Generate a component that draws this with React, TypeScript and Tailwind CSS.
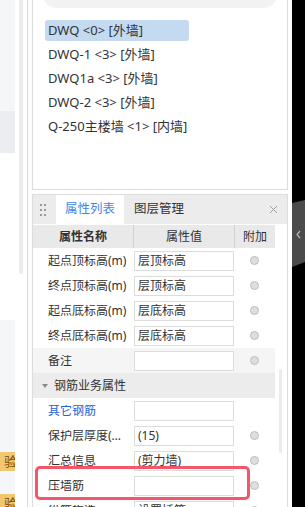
import React from 'react';

type Row = {
  name: string;
  value: string;
  blue?: boolean;
  dot?: boolean;
  hover?: boolean;
};

const walls = ['DWQ <0> [外墙]', 'DWQ-1 <3> [外墙]', 'DWQ1a <3> [外墙]', 'DWQ-2 <3> [外墙]', 'Q-250主楼墙 <1> [内墙]'];

const baseRows: Row[] = [
  { name: '起点顶标高(m)', value: '层顶标高', dot: true },
  { name: '终点顶标高(m)', value: '层顶标高', dot: true },
  { name: '起点底标高(m)', value: '层底标高', dot: true },
  { name: '终点底标高(m)', value: '层底标高', dot: true },
  { name: '备注', value: '', dot: true, hover: true },
];

const rebarRows: Row[] = [
  { name: '其它钢筋', value: '', blue: true },
  { name: '保护层厚度(mm)', value: '(15)', dot: true },
  { name: '汇总信息', value: '(剪力墙)', dot: true },
  { name: '压墙筋', value: '', dot: true },
  { name: '纵筋构造', value: '设置插筋', dot: true },
];

function PropRow({ row }: { row: Row }) {
  return (
    <div className={`flex h-[25px] shrink-0 items-center ${row.hover ? 'bg-[#f5f5f5]' : ''}`}>
      <div className={`w-[101px] truncate pl-[15px] pr-[6px] ${row.blue ? 'text-[#2463d6]' : 'text-[#333]'}`}>{row.name}</div>
      <div className="flex h-[20px] w-[100px] items-center border border-[#dcdcdc] bg-white pl-[3px] text-[#333]">{row.value}</div>
      <div className="flex w-[41px] justify-center">
        {row.dot && <div className="h-[9px] w-[9px] rounded-full border border-[#bdbdbd] bg-[#dedede]" />}
      </div>
    </div>
  );
}

export default function App() {
  return (
    <div
      className="relative flex h-[507px] w-[305px] overflow-hidden bg-white text-[12px] leading-none"
      style={{ fontFamily: '"Noto Sans", "Noto Sans CJK SC", sans-serif' }}>
      {/* ---------------- left page strip ---------------- */}
      <div className="flex w-[15px] shrink-0 flex-col">
        <div className="h-[111px] shrink-0 bg-[#f5f6f8]" />
        <div className="h-[42px] shrink-0 bg-[#ebedf0]" />
        <div className="h-[167px] shrink-0 bg-white" />
        <div className="flex flex-1 flex-col bg-[#f5f6f8]">
          <div className="mt-[132px] flex h-[19px] shrink-0 items-center justify-end overflow-hidden bg-[#f2c772] text-[13px] text-[#7a4b00]">
            <span className="-mr-[2px]">验</span>
          </div>
          <div className="mt-[23px] flex h-[19px] shrink-0 items-center justify-end overflow-hidden bg-[#f2c772] text-[13px] text-[#7a4b00]">
            <span className="-mr-[2px]">验</span>
          </div>
        </div>
      </div>
      <div className="ml-[4px] w-[4px] shrink-0">
        <div className="h-[274px] rounded-b-full bg-[#ebebeb]" />
      </div>
      <div className="w-[4px] shrink-0" />
      <div className="w-px shrink-0 bg-[#dadada]" />
      <div className="w-[4px] shrink-0 bg-[#fcfcfc]" />

      {/* ---------------- panels ---------------- */}
      <div className="flex w-[256px] shrink-0 flex-col overflow-hidden">
        {/* component list */}
        <div className="flex h-[190px] shrink-0 flex-col border-x border-b border-[#dcdcdc] bg-white">
          <div className="-mt-[22px] ml-[9px] mr-[9px] flex h-[30px] shrink-0 items-center justify-between rounded-full bg-[#f2f2f2] px-[12px] text-[13px] text-[#999]">
            <span>搜索构件...</span>
            <span className="text-[11px] text-[#aaa]">⌕</span>
          </div>
          <div className="mt-[12px] flex flex-col gap-[3px] text-[13px] text-[#333]">
            {walls.map((w, i) => (
              <div
                key={w}
                className={`ml-[12px] flex h-[21px] w-[144px] shrink-0 items-center whitespace-nowrap rounded-[3px] pl-[3px] ${i === 0 ? 'bg-[#c4daf1]' : ''}`}>
                {w}
              </div>
            ))}
          </div>
        </div>

        {/* property panel */}
        <div className="mt-[4px] flex flex-1 flex-col border-x border-t border-[#dcdcdc] bg-white">
          <div className="flex h-[29px] shrink-0 items-stretch bg-[#ececec]">
            <div className="ml-[7px] mr-[10px] grid grid-cols-2 content-center gap-x-[2px] gap-y-[3px]">
              {[0, 1, 2, 3, 4, 5].map((d) => (
                <div key={d} className="h-[2px] w-[2px] bg-[#999]" />
              ))}
            </div>
            <div className="flex w-[68px] items-center justify-center bg-white text-[12.5px] text-[#3f86e8]">属性列表</div>
            <div className="ml-[10px] flex items-center text-[12.5px] text-[#333]">图层管理</div>
            <div className="ml-auto mr-[9px] flex items-center">
              <svg width="9" height="9" viewBox="0 0 9 9">
                <path d="M1 1 L8 8 M8 1 L1 8" stroke="#a0a0a0" strokeWidth="1" />
              </svg>
            </div>
          </div>

          <div className="mt-[1px] flex">
            <div className="flex w-[242px] flex-col">
              <div className="flex h-[23px] shrink-0 items-center bg-[#e9e9e9] font-bold text-[#333]">
                <div className="flex h-full w-[101px] items-center justify-center border-r border-[#d2d2d2]">属性名称</div>
                <div className="flex h-full w-[101px] items-center justify-center border-r border-[#d2d2d2] font-normal">属性值</div>
                <div className="flex w-[40px] justify-center font-normal">附加</div>
              </div>
              {baseRows.map((r) => (
                <PropRow key={r.name} row={r} />
              ))}
              <div className="flex h-[25px] shrink-0 items-center bg-[#ececec] text-[#333]">
                <svg className="ml-[9px] mr-[6px]" width="6" height="4" viewBox="0 0 6 4">
                  <polygon points="0,0 6,0 3,4" fill="#8a8a8a" />
                </svg>
                <span>钢筋业务属性</span>
              </div>
              {rebarRows.map((r) => (
                <PropRow key={r.name} row={r} />
              ))}
            </div>
            <div className="ml-[4px] mt-[144px] h-[84px] w-[3px] rounded-full bg-[#ebebeb]" />
          </div>
        </div>
      </div>

      <div className="w-[4px] shrink-0" />

      {/* ---------------- right dark edge ---------------- */}
      <div className="relative w-[13px] shrink-0 bg-black">
        <svg className="absolute left-0 top-[200px]" width="13" height="68" viewBox="0 0 13 68">
          <polygon points="0,3 13,0 13,62 0,67" fill="#4b4b4b" />
          <path d="M8 31 L5 34.5 L8 38" stroke="#b5b5b5" strokeWidth="1.2" fill="none" />
        </svg>
      </div>

      {/* highlight box on the 压墙筋 row */}
      <div className="pointer-events-none absolute left-[35px] top-[466px] h-[34px] w-[215px] rounded-[5px] border-[3px] border-[#f4566a]" />
    </div>
  );
}
